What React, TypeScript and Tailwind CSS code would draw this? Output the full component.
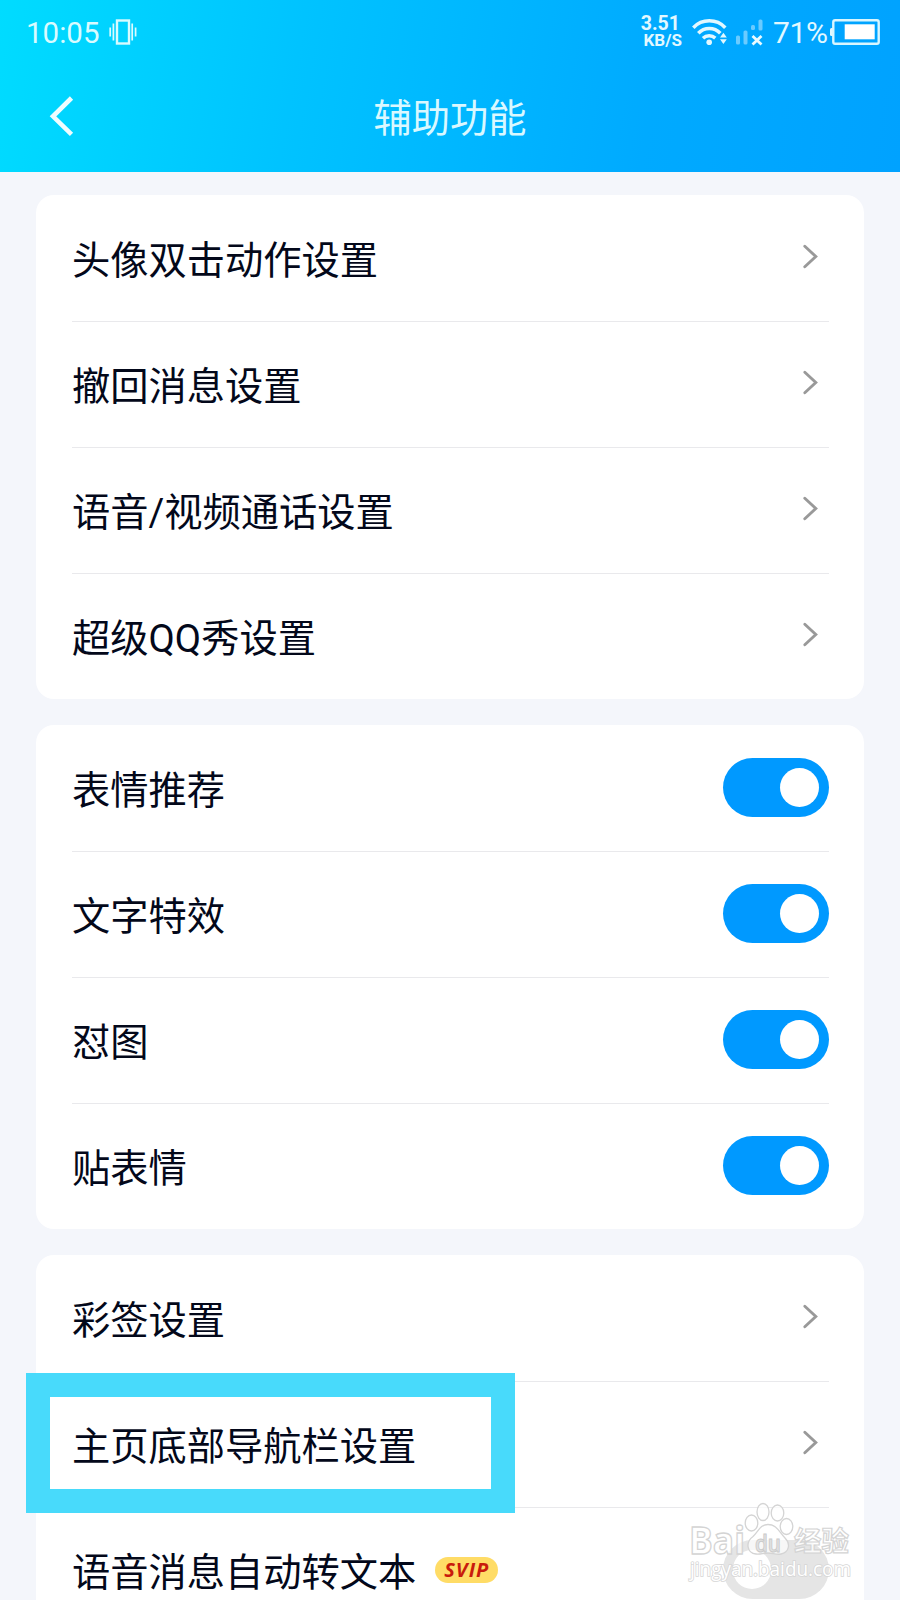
import type { ReactNode } from "react";

function VibrateIcon() {
  return (
    <svg width="28" height="26" viewBox="0 0 28 26" fill="none" stroke="#d9fbff">
      <rect x="8" y="1.5" width="12" height="23" strokeWidth="2.4" />
      <path d="M4.4 4.5v17M23.2 4.5v17" strokeWidth="1.7" />
      <path d="M1.2 8.5v9M26.6 8.5v9" strokeWidth="1.7" />
    </svg>
  );
}

function WifiIcon() {
  return (
    <svg width="36" height="27" viewBox="0 0 36 27" fill="none" stroke="#e2f8ff" strokeWidth="3.5">
      <path d="M1.3 8.7a22 22 0 0 1 32 0" />
      <path d="M6.3 14.2a15 15 0 0 1 22 0" />
      <path d="M11 19.3a9 9 0 0 1 12.3-.2" />
      <circle cx="17.2" cy="23.3" r="2.8" fill="#e2f8ff" stroke="none" />
      <path d="M28 18.5l3.4-4.7 3.4 4.7zM28 20.3l3.4 4.7 3.4-4.7z" fill="#e2f8ff" stroke="none" />
    </svg>
  );
}

function SignalIcon() {
  return (
    <svg width="28" height="27" viewBox="0 0 28 27">
      <g fill="#6bcbff">
        <rect x="0" y="16.5" width="4" height="9" rx="1.6" />
        <rect x="7.5" y="11.5" width="4" height="14" rx="1.6" />
        <rect x="15" y="6" width="4" height="5" rx="1.6" />
        <rect x="22.5" y="0.5" width="4" height="11" rx="1.6" />
      </g>
      <path d="M16.5 17l9 8.5M25.5 17l-9 8.5" stroke="#e9faff" strokeWidth="2.8" />
    </svg>
  );
}

function BatteryIcon() {
  return (
    <svg width="50" height="26" viewBox="0 0 50 26">
      <path d="M3 9H1.5Q0 9 0 10.5v5Q0 17 1.5 17H3z" fill="#e2f8ff" />
      <rect x="3.3" y="1.3" width="45.4" height="23.4" rx="1.8" fill="none" stroke="#d9f6ff" strokeWidth="2.4" />
      <rect x="14.7" y="5.3" width="30" height="15" fill="#fff" />
    </svg>
  );
}

function Chevron() {
  return (
    <svg className="mr-[11px] -mt-0.5" width="16" height="25" viewBox="0 0 16 25" fill="none" stroke="#999" strokeWidth="2.9" strokeLinecap="round">
      <path d="M2.8 2.3l11 10.2-11 10.2" />
    </svg>
  );
}

function Toggle({ on = true }: { on?: boolean }) {
  return (
    <span
      className={
        on
          ? "flex h-[58.5px] w-[106px] items-center justify-end rounded-full bg-[#0099ff] px-[10px]"
          : "flex h-[58.5px] w-[106px] items-center justify-start rounded-full bg-[#e5e5e5] px-[10px]"
      }
    >
      <span className="size-[38.5px] rounded-full bg-white" />
    </span>
  );
}

function Row({ label, children, badge, last }: { label: string; children: ReactNode; badge?: ReactNode; last?: boolean }) {
  return (
    <div className={last ? "h-[124.5px]" : "h-[126px] border-b border-[#e9e9ec]"}>
      <div className="flex h-[123.4px] items-center justify-between">
        <div className="flex items-center gap-[19px]">
          <span className="pt-[7px] text-[38.25px] leading-[56px] text-[#03081a]">{label}</span>
          {badge}
        </div>
        {children}
      </div>
    </div>
  );
}

function Card({ children }: { children: ReactNode }) {
  return <section className="rounded-[18px] bg-white pt-px pr-[35.5px] pl-9">{children}</section>;
}

function SvipBadge() {
  return (
    <span className="flex h-[26px] w-[63px] items-center justify-center rounded-full bg-[#ffdc66] font-['Open_Sans',sans-serif] text-[20px] leading-none font-bold tracking-[1px] text-[#c91b0c] italic">
      SVIP
    </span>
  );
}

function Watermark() {
  return (
    <svg className="absolute top-[1500px] left-[684px]" width="180" height="84" viewBox="0 0 180 84" fontFamily="'Open Sans', 'Noto Sans CJK SC', sans-serif">
      <g fill="#fff" fillOpacity="0.7" stroke="#d4d4d4" strokeWidth="1.3">
        <text x="5" y="53.5" fontSize="37" fontWeight="700" textLength="56" lengthAdjust="spacingAndGlyphs">Bai</text>
        <ellipse cx="67.5" cy="23" rx="6.3" ry="8" />
        <ellipse cx="79" cy="12" rx="6" ry="8.5" />
        <ellipse cx="93.5" cy="13" rx="6.3" ry="8" />
        <ellipse cx="102.5" cy="26.5" rx="6.3" ry="8" />
        <path d="M84 24.5c-8 0-9.5 7-15 12-8 6-6 16.5 3 17.5 5 .5 7-1 12-1s8 2 13 1c8-1.5 10-10 4-16-6-6-8-13.5-17-13.5z" />
      </g>
      <text x="71" y="51.5" fontSize="24" fontWeight="600" textLength="26" lengthAdjust="spacingAndGlyphs" fill="#e2e2e2" stroke="#cbcbcb" strokeWidth="1">du</text>
      <text x="110" y="51" fontSize="27.5" fontWeight="700" fill="#fff" fillOpacity="0.8" stroke="#d4d4d4" strokeWidth="1.2">经验</text>
      <text x="6" y="76" fontSize="20" textLength="161" lengthAdjust="spacingAndGlyphs" fill="#fff" stroke="#d6d6d6" strokeWidth="1.7" paintOrder="stroke">jingyan.baidu.com</text>
    </svg>
  );
}

export default function App() {
  return (
    <div className="relative h-[1600px] w-[900px] overflow-hidden bg-[#f4f6fb] font-[Roboto,'Noto_Sans_CJK_SC',sans-serif]">
      <header className="h-[172px] bg-[linear-gradient(100deg,#00dcff_0%,#00c3ff_33%,#00aaff_72%,#00a2ff_100%)]">
        <div className="flex h-16 items-center justify-between pr-5 pl-[26px]">
          <div className="flex items-center gap-[10px] text-[#d9fbff]">
            <span className="mt-[3px] text-[29.5px] leading-none">10:05</span>
            <VibrateIcon />
          </div>
          <div className="flex items-center text-[#e2f8ff]">
            <span className="mr-[10px] flex flex-col items-end pb-px font-bold">
              <span className="mr-[2px] text-[19.5px] leading-[17px]">3.51</span>
              <span className="text-[17px] leading-[16px]">KB/S</span>
            </span>
            <WifiIcon />
            <span className="ml-[8px] flex"><SignalIcon /></span>
            <span className="mt-0.5 ml-[9px] mr-[2px] w-[55px] text-[30px] leading-none tracking-[-0.3px]">71%</span>
            <BatteryIcon />
          </div>
        </div>
        <div className="grid h-[104px] grid-cols-[1fr_auto_1fr] items-center">
          <svg className="ml-[49px]" width="26" height="42" viewBox="0 0 26 42" fill="none" stroke="#effdff" strokeWidth="4.6">
            <path d="M22.5 3L4 21.3l18.5 18" />
          </svg>
          <h1 className="pt-1.5 text-[38.25px] leading-[56px] font-normal text-[#d9f8ff]">辅助功能</h1>
        </div>
      </header>
      <main className="flex flex-col gap-[26.5px] px-9 pt-[23px]">
        <Card>
          <Row label="头像双击动作设置"><Chevron /></Row>
          <Row label="撤回消息设置"><Chevron /></Row>
          <Row label="语音/视频通话设置"><Chevron /></Row>
          <Row label="超级QQ秀设置" last><Chevron /></Row>
        </Card>
        <Card>
          <Row label="表情推荐"><Toggle /></Row>
          <Row label="文字特效"><Toggle /></Row>
          <Row label="怼图"><Toggle /></Row>
          <Row label="贴表情" last><Toggle /></Row>
        </Card>
        <Card>
          <Row label="彩签设置"><Chevron /></Row>
          <Row label="主页底部导航栏设置"><Chevron /></Row>
          <Row label="语音消息自动转文本" badge={<SvipBadge />} last><Toggle on={false} /></Row>
        </Card>
      </main>
      <div className="absolute top-[1372.5px] left-[26px] h-[140.5px] w-[489px] border-24 border-[#48dafb]" />
      <Watermark />
    </div>
  );
}
